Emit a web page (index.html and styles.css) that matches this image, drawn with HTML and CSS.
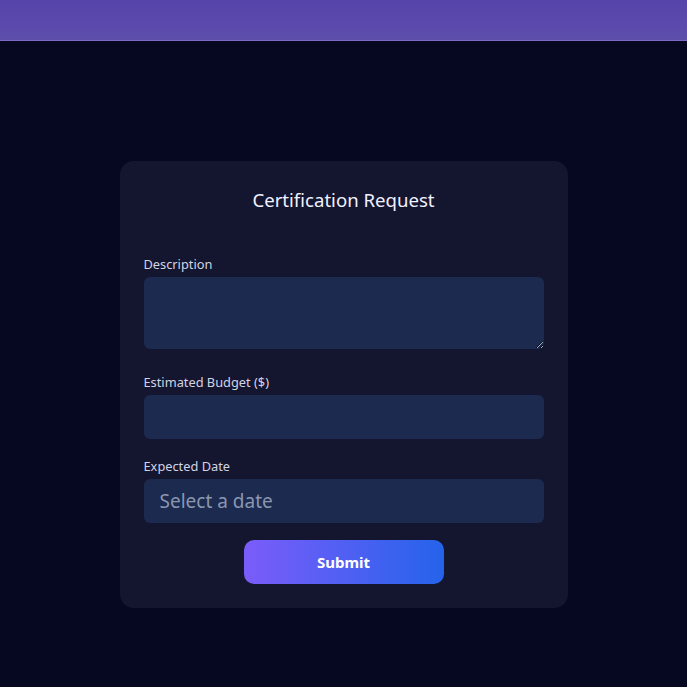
FILE: index.html
```html
<!DOCTYPE html>
<html lang="en">
<head>
<meta charset="utf-8">
<title>Certification Request</title>
<link rel="stylesheet" href="styles.css">
</head>
<body>
<header class="topbar"></header>
<main class="page">
  <form class="card">
    <h2 class="card-title">Certification Request</h2>
    <div class="field">
      <label class="field-label" for="desc">Description</label>
      <textarea id="desc" class="control control-area"></textarea>
    </div>
    <div class="field">
      <label class="field-label" for="budget">Estimated Budget ($)</label>
      <input id="budget" class="control" type="text">
    </div>
    <div class="field field-last">
      <label class="field-label" for="date">Expected Date</label>
      <input id="date" class="control control-date" type="text" placeholder="Select a date">
    </div>
    <div class="actions">
      <button type="button" class="submit">Submit</button>
    </div>
  </form>
</main>
</body>
</html>
```

FILE: styles.css
```css
* { box-sizing: border-box; }
html, body { margin: 0; padding: 0; }
body {
  background: #060822;
  font-family: "Noto Sans", "Open Sans", sans-serif;
  min-height: 687px;
}
.topbar {
  height: 41px;
  background: linear-gradient(180deg, #5643ab 0%, #5e4eab 100%);
  border-bottom: 1px solid #7c69c6;
}
.page {
  display: flex;
  justify-content: center;
  padding-top: 120px;
}
.card {
  width: 448px;
  background: #14152f;
  border-radius: 14px;
  padding: 24px;
}
.card-title {
  margin: 2px 0 42px;
  text-align: center;
  font-size: 18.6px;
  font-weight: 400;
  line-height: 26px;
  color: #f1f1ff;
}
.field {
  display: flex;
  flex-direction: column;
  margin-bottom: 18px;
}
.field-last { margin-bottom: 17px; }
.field-label {
  display: block;
  font-size: 12.8px;
  line-height: 18px;
  color: #d0d4e4;
  margin-bottom: 4px;
}
.control {
  display: block;
  width: 100%;
  height: 44px;
  border: none;
  border-radius: 6px;
  background: #1b2a4e;
  color: #e5e7eb;
  font-family: inherit;
  font-size: 19px;
  padding: 0 16px;
  outline: none;
}
.control-area {
  height: 72px;
  margin-bottom: 6px;
  resize: vertical;
}
.control::placeholder { color: #8b97b1; }
.actions {
  display: flex;
  justify-content: center;
}
.submit {
  width: 200px;
  height: 44px;
  border: none;
  border-radius: 10px;
  background: linear-gradient(90deg, #7b5cfa 0%, #2563eb 100%);
  color: #ffffff;
  font-family: inherit;
  font-size: 15px;
  font-weight: 700;
}
```
